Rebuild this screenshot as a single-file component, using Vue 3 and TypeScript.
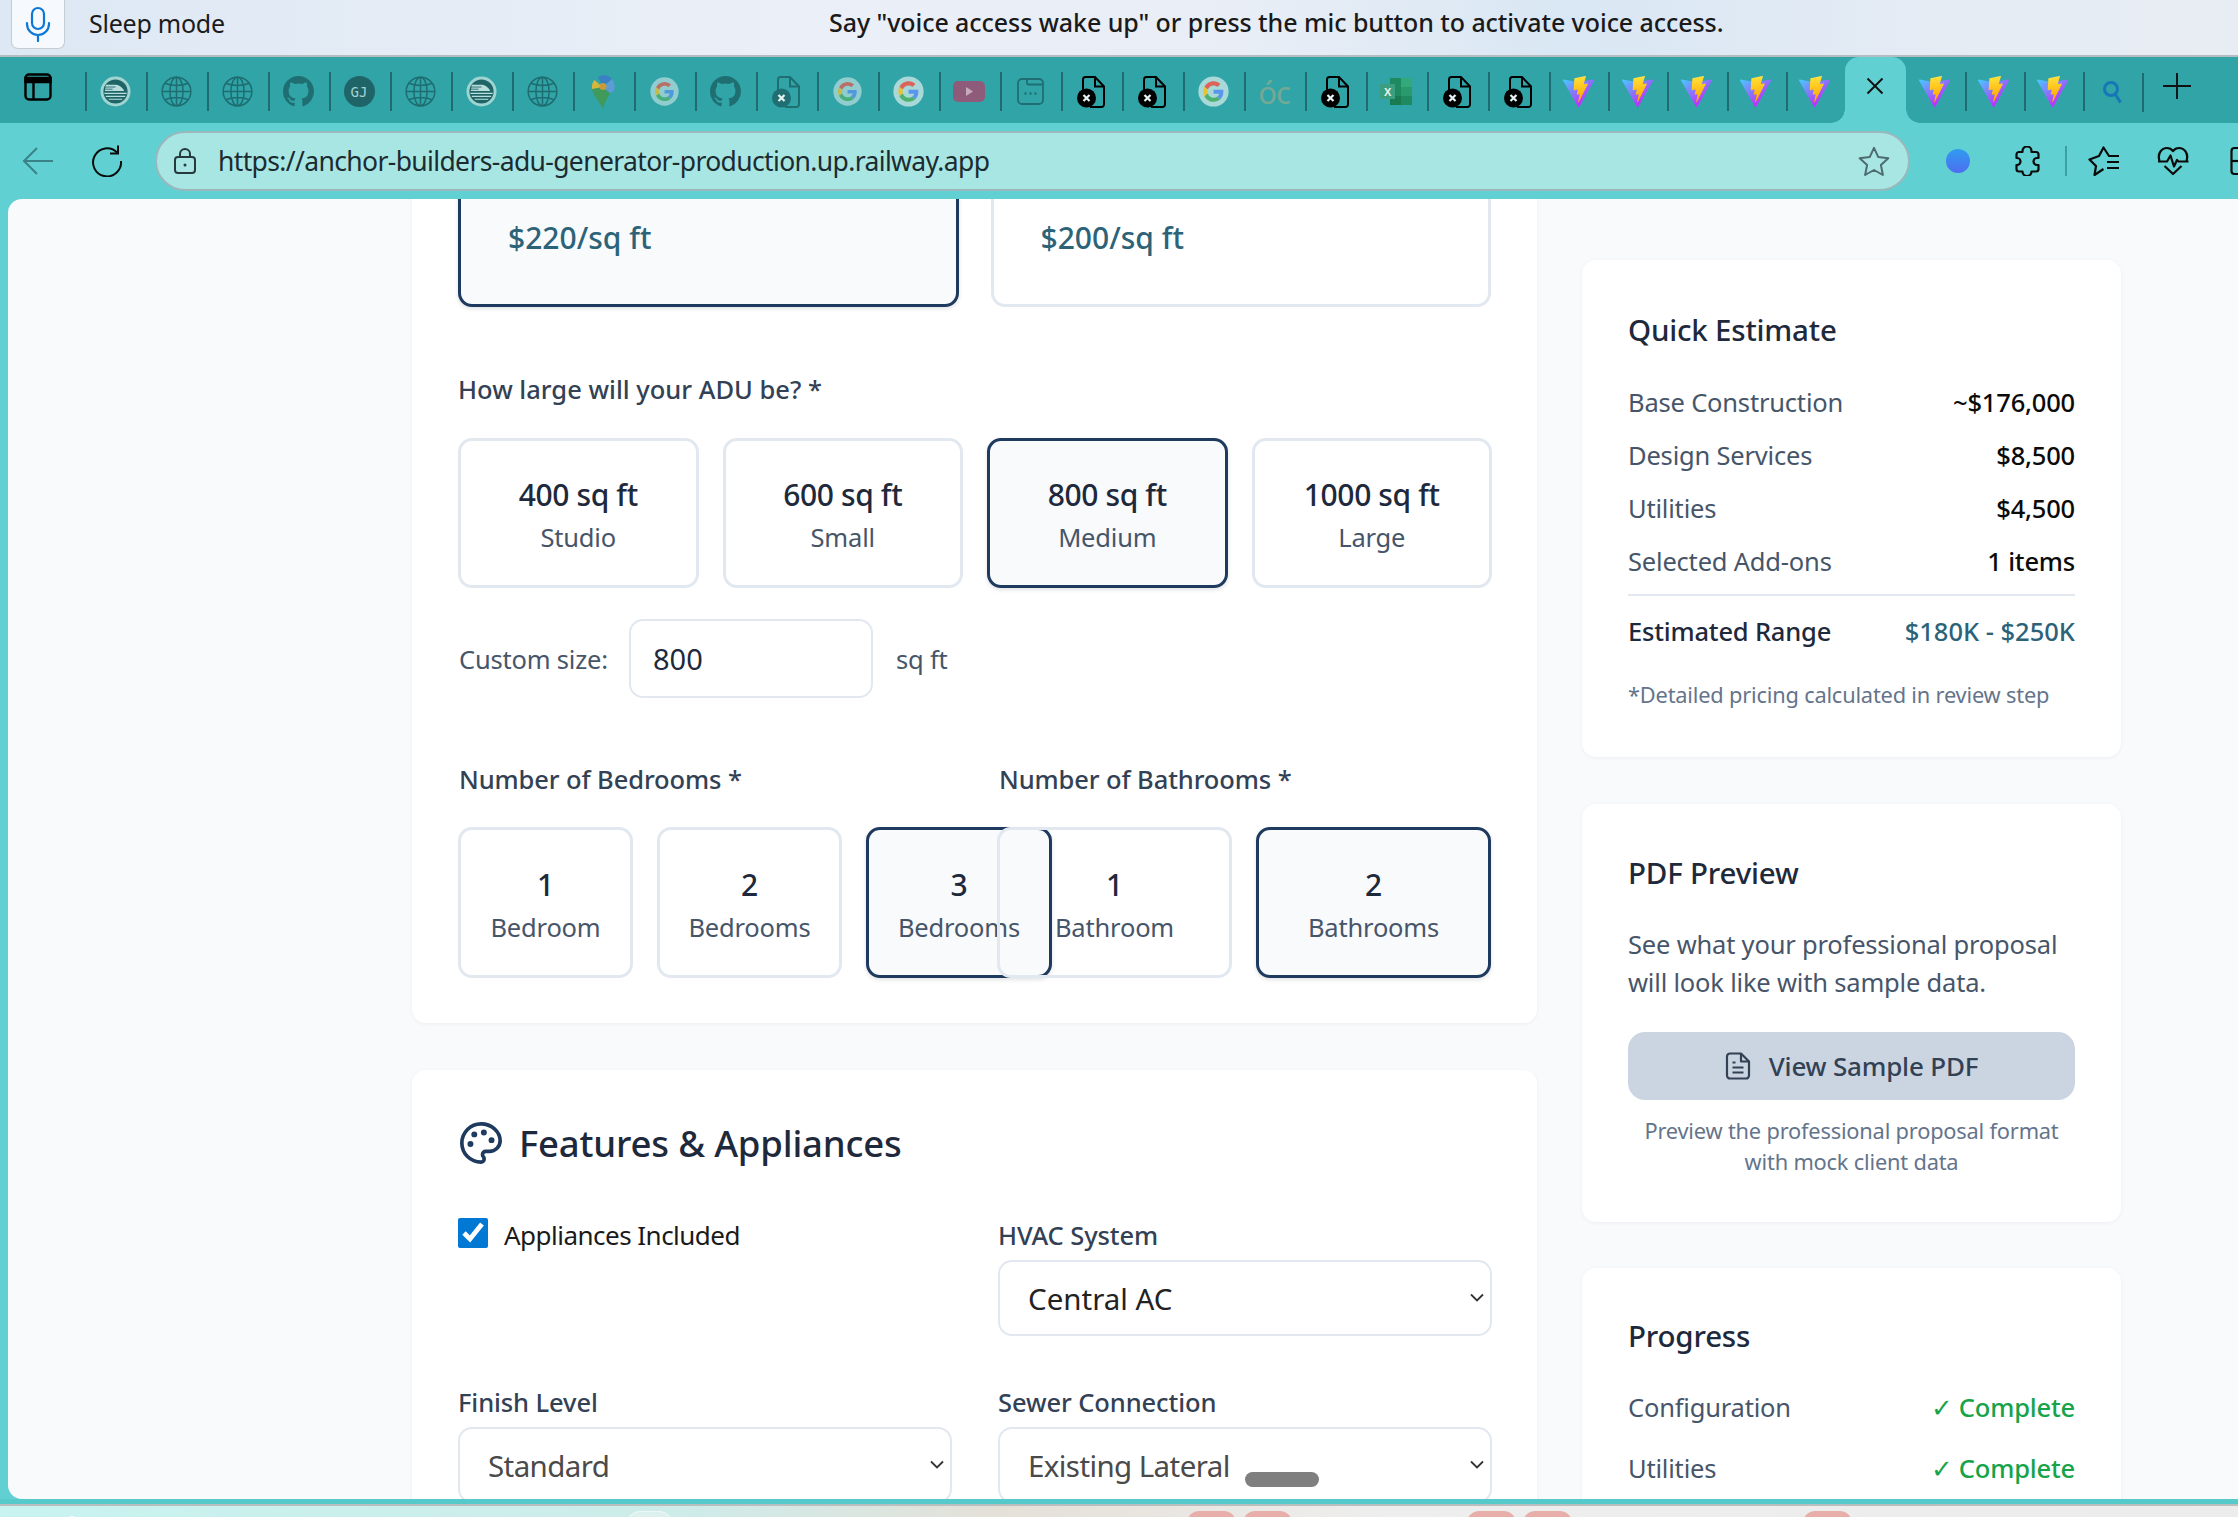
<script setup lang="ts">
const leftTabs: string[] = ['train','globe','globe','github','gj','globe','train','globe','maps','googs','github','docf','googs','goog','yt','win','doc','doc','goog','oc','doc','xl','doc','doc']
const sizes = [
  { a: '400 sq ft', b: 'Studio', on: false },
  { a: '600 sq ft', b: 'Small', on: false },
  { a: '800 sq ft', b: 'Medium', on: true },
  { a: '1000 sq ft', b: 'Large', on: false },
]
const beds = [
  { a: '1', b: 'Bedroom', on: false },
  { a: '2', b: 'Bedrooms', on: false },
  { a: '3', b: 'Bedrooms', on: true },
]
const baths = [
  { a: '1', b: 'Bathroom', on: false },
  { a: '2', b: 'Bathrooms', on: true },
]
const estimate = [
  ['Base Construction', '~$176,000'],
  ['Design Services', '$8,500'],
  ['Utilities', '$4,500'],
  ['Selected Add-ons', '1 items'],
]
</script>

<template>
  <div class="screen">
    <svg class="defs" width="0" height="0">
      <defs>
        <linearGradient id="va" x1="6" y1="33" x2="235" y2="344" gradientUnits="userSpaceOnUse"><stop offset="0" stop-color="#41D1FF"/><stop offset="1" stop-color="#BD34FE"/></linearGradient>
        <linearGradient id="vb" x1="194" y1="8" x2="236" y2="292" gradientUnits="userSpaceOnUse"><stop offset="0" stop-color="#FFEA83"/><stop offset=".08" stop-color="#FFDD35"/><stop offset="1" stop-color="#FFA800"/></linearGradient>
        <symbol id="i-vite" viewBox="0 0 410 404">
          <path fill="url(#va)" d="M399.641 59.525L215.643 388.545c-3.799 6.793-13.559 6.833-17.415.073L10.582 59.556C6.38 52.19 12.68 43.266 21.028 44.76l184.195 32.923c1.175.21 2.378.208 3.553-.006l180.343-32.87c8.32-1.517 14.649 7.337 10.522 14.718z"/>
          <path fill="url(#vb)" d="M292.965 1.574L156.801 28.255a5 5 0 00-4.03 4.611l-8.376 141.464c-.197 3.332 2.863 5.918 6.115 5.168l37.91-8.749c3.547-.818 6.752 2.306 6.023 5.873l-11.263 55.153c-.758 3.712 2.727 6.886 6.352 5.785l23.415-7.114c3.63-1.102 7.118 2.081 6.35 5.796l-17.899 86.633c-1.12 5.419 6.088 8.374 9.094 3.728l2.008-3.103 110.954-221.428c1.858-3.707-1.346-7.935-5.418-7.15l-39.022 7.532c-3.667.707-6.787-2.708-5.752-6.296l25.469-88.291c1.036-3.594-2.095-7.012-5.766-6.293z"/>
        </symbol>
        <symbol id="i-globe" viewBox="0 0 32 32">
          <g fill="none" stroke="#1e6d70" stroke-width="1.500"><circle cx="16" cy="16" r="14.800"/><ellipse cx="16" cy="16" rx="6.800" ry="14.800"/><path d="M16 1.200v29.600M4 7.500c7 3 17 3 24 0M4 24.500c7-3 17-3 24 0M1.200 16h29.600"/></g>
        </symbol>
        <symbol id="i-train" viewBox="0 0 32 32">
          <circle cx="16" cy="16" r="14" fill="#1f6467" stroke="#a0d4d1" stroke-width="3"/>
          <path d="M6 9h9c4 0 8 2 10 6.500H5z" fill="#b8dedc"/>
          <path d="M5 11.400h11M5 13.600h8" stroke="#1f6467" stroke-width=".9"/>
          <path d="M4.500 18h23M6 21h20M9 24h14" stroke="#b8dedc" stroke-width="1.200"/>
        </symbol>
        <symbol id="i-github" viewBox="0 0 16 16">
          <path fill="#1f6f72" d="M8 0C3.58 0 0 3.58 0 8c0 3.54 2.29 6.53 5.47 7.59.4.07.55-.17.55-.38 0-.19-.01-.82-.01-1.49-2.01.37-2.53-.49-2.69-.94-.09-.23-.48-.94-.82-1.13-.28-.15-.68-.52-.01-.53.63-.01 1.08.58 1.23.82.72 1.21 1.87.87 2.33.66.07-.52.28-.87.51-1.07-1.78-.2-3.64-.89-3.64-3.95 0-.87.31-1.59.82-2.15-.08-.2-.36-1.02.08-2.12 0 0 .67-.21 2.2.82.64-.18 1.32-.27 2-.27.68 0 1.36.09 2 .27 1.53-1.04 2.2-.82 2.2-.82.44 1.1.16 1.92.08 2.12.51.56.82 1.27.82 2.15 0 3.07-1.87 3.75-3.65 3.95.29.25.54.73.54 1.48 0 1.07-.01 1.93-.01 2.2 0 .21.15.46.55.38A8.013 8.013 0 0016 8c0-4.42-3.58-8-8-8z"/>
        </symbol>
        <symbol id="i-goog" viewBox="0 0 32 32">
          <circle cx="16" cy="16" r="15.600" fill="#a9d8d8"/>
          <g transform="translate(5.500 5.500) scale(.44)" opacity=".78">
            <path fill="#EA4335" d="M24 9.500c3.540 0 6.710 1.220 9.210 3.600l6.850-6.850C35.900 2.380 30.470 0 24 0 14.620 0 6.510 5.380 2.560 13.220l7.980 6.190C12.430 13.720 17.740 9.500 24 9.500z"/>
            <path fill="#4285F4" d="M46.980 24.550c0-1.570-.15-3.090-.38-4.550H24v9.020h12.940c-.58 2.960-2.260 5.480-4.780 7.180l7.730 6c4.510-4.180 7.090-10.360 7.090-17.650z"/>
            <path fill="#FBBC05" d="M10.530 28.590c-.48-1.450-.76-2.990-.76-4.590s.27-3.140.76-4.590l-7.980-6.190C.92 16.460 0 20.120 0 24c0 3.880.92 7.540 2.560 10.780l7.970-6.190z"/>
            <path fill="#34A853" d="M24 48c6.480 0 11.930-2.130 15.890-5.810l-7.730-6c-2.150 1.450-4.920 2.300-8.160 2.300-6.260 0-11.570-4.220-13.470-9.910l-7.980 6.190C6.510 42.620 14.620 48 24 48z"/>
          </g>
        </symbol>
        <symbol id="i-doc" viewBox="0 0 28 32">
          <path fill="none" stroke="currentColor" stroke-width="2" d="M6 14V3.500A2.500 2.500 0 0 1 8.500 1H18l9 9.500V28.500A2.500 2.500 0 0 1 24.500 31H13"/>
          <path fill="none" stroke="currentColor" stroke-width="2" d="M18 1v9.500h9"/>
          <circle cx="9.500" cy="22" r="9.500" fill="currentColor"/>
          <path d="M6.500 19l6 6M12.500 19l-6 6" stroke="#e8f4f4" stroke-width="2.200"/>
        </symbol>
        <symbol id="i-maps" viewBox="0 0 24 34">
          <path fill="#3f9a5c" d="M12 34C9 27 2 21 1 14l10-2 8 6c-2 5-6 10-7 16z"/>
          <path fill="#d4b73c" d="M1 14C.6 10 1.500 7 3.500 5l8 7z"/>
          <path fill="#3b7fc4" d="M7 2c5-3 11-2 14 2l-9 8z"/>
          <path fill="#5c9bd4" d="M21 4c2.500 3 3.500 8 2 12l-4 2-7-6z"/>
          <circle cx="12" cy="11.500" r="3.500" fill="#c79a3a"/>
        </symbol>
      </defs>
    </svg>

    <header class="voice">
      <div class="mic">
        <svg width="26" height="36" viewBox="0 0 26 36" fill="none" stroke="#0a78d6" stroke-width="2.200" stroke-linecap="round"><rect x="7" y="2" width="12" height="21" rx="6"/><path d="M2 17v1a11 11 0 0 0 22 0v-1M13 29v6"/></svg>
      </div>
      <span class="sleep">Sleep mode</span>
      <span class="say">Say "voice access wake up" or press the mic button to activate voice access.</span>
    </header>

    <nav class="tabs">
      <div class="panel-btn">
        <svg width="28" height="28" viewBox="0 0 28 28" fill="none" stroke="#000" stroke-width="2.400"><rect x="1.500" y="1.500" width="25" height="25" rx="3.500"/><path d="M1.500 5h25v4h-25z" fill="#000"/><path d="M9.500 9v17"/></svg>
      </div>
      <div v-for="(t, i) in leftTabs" :key="i" class="tab">
        <svg v-if="t === 'globe'" class="ic30"><use href="#i-globe"/></svg>
        <svg v-else-if="t === 'train'" class="ic30"><use href="#i-train"/></svg>
        <svg v-else-if="t === 'github'" class="ic30"><use href="#i-github"/></svg>
        <span v-else-if="t === 'gj'" class="gj">GJ</span>
        <svg v-else-if="t === 'maps'" class="maps"><use href="#i-maps"/></svg>
        <svg v-else-if="t === 'goog'" class="ic30"><use href="#i-goog"/></svg>
        <svg v-else-if="t === 'googs'" class="googs"><use href="#i-goog"/></svg>
        <svg v-else-if="t === 'docf'" class="doc docf"><use href="#i-doc"/></svg>
        <svg v-else-if="t === 'doc'" class="doc"><use href="#i-doc"/></svg>
        <svg v-else-if="t === 'yt'" width="32" height="21" viewBox="0 0 32 21"><rect width="32" height="21" rx="5" fill="#8f5b7b"/><path d="M13 6l7 4.500-7 4.500z" fill="#c7a9bc"/></svg>
        <svg v-else-if="t === 'win'" width="27" height="27" viewBox="0 0 27 27" fill="none" stroke="#1f6f72" stroke-width="1.800"><rect x="1" y="1" width="25" height="25" rx="4"/><path d="M10 1v4a1.500 1.500 0 0 0 1.500 1.500H26"/><path d="M7.500 15.500h2M12.500 15.500h2M17.500 15.500h2" stroke-width="2.600"/></svg>
        <span v-else-if="t === 'oc'" class="oc">óc</span>
        <svg v-else-if="t === 'xl'" width="32" height="27" viewBox="0 0 32 27"><rect x="10" y="0" width="22" height="27" fill="#1f8a60"/><rect x="21" y="0" width="11" height="9" fill="#33a87a"/><rect x="21" y="9" width="11" height="9" fill="#2a9a6d"/><rect x="10" y="18" width="11" height="9" fill="#197a52"/><rect x="0" y="6" width="15" height="15" fill="#3b9e7f"/><text x="7.500" y="17.500" text-anchor="middle" font-size="11" font-weight="700" fill="#e8f5ef" font-family="Liberation Sans">X</text></svg>
      </div>
      <div v-for="n in 5" :key="'v' + n" class="tab vt"><svg class="vite"><use href="#i-vite"/></svg></div>
      <div class="active-tab">
        <svg width="18" height="18" viewBox="0 0 18 18" stroke="#111" stroke-width="1.900"><path d="M1.500 1.500l15 15M16.500 1.500l-15 15"/></svg>
      </div>
      <div v-for="n in 3" :key="'w' + n" class="tab after" :class="{ nosep: n === 1 }"><svg class="vite"><use href="#i-vite"/></svg></div>
      <div class="tab after"><svg width="20" height="24" viewBox="0 0 20 24" fill="none" stroke="#1776b8" stroke-width="3"><circle cx="9" cy="9" r="6.500"/><path d="M13.500 14.500l5 8"/></svg></div>
      <div class="plus">
        <svg width="28" height="26" viewBox="0 0 28 26" stroke="#111" stroke-width="1.900"><path d="M14 0v26M0 13h28"/></svg>
      </div>
    </nav>

    <div class="toolbar">
      <svg class="back" width="32" height="30" viewBox="0 0 32 30" fill="none" stroke="#3a8286" stroke-width="2"><path d="M31 15H2M15 2L2 15l13 13"/></svg>
      <svg class="reload" width="32" height="32" viewBox="0 0 32 32" fill="none" stroke="#0b0b0b" stroke-width="2"><path d="M26 7.500A14 14 0 1 0 30 16"/><path d="M19 8.500h8v-8"/></svg>
      <div class="addr">
        <svg width="24" height="26" viewBox="0 0 24 26" fill="none" stroke="#27393d" stroke-width="2"><rect x="2" y="9" width="20" height="16" rx="3"/><path d="M7 9V6a5 5 0 0 1 10 0v3"/><circle cx="12" cy="17" r="1.500" fill="#27393d" stroke="none"/></svg>
        <span class="url">https://anchor-builders-adu-generator-production.up.railway.app</span>
        <svg class="star" width="32" height="30" viewBox="0 0 32 30" fill="none" stroke="#4e6b70" stroke-width="2" stroke-linejoin="round"><path d="M16 1.800l4.300 9.300 10 1.100-7.400 6.800 2 10-8.900-5-8.900 5 2-10-7.400-6.800 10-1.100z"/></svg>
      </div>
      <span class="blob"></span>
      <svg class="ext" width="28" height="30" viewBox="0 0 28 30" fill="none" stroke="#0b0b0b" stroke-width="2.200" stroke-linejoin="round"><path d="M9.500 6V5a4.500 4.500 0 0 1 9 0v1H23a2.500 2.500 0 0 1 2.500 2.500V12H24a3.500 3.500 0 0 0 0 7h1.500v4a2.500 2.500 0 0 1-2.500 2.500h-4.500a4.500 4.500 0 0 1-9 0H6A2.500 2.500 0 0 1 3.500 23v-4H4a3.500 3.500 0 0 0 0-7h-.500V8.500A2.500 2.500 0 0 1 6 6z"/></svg>
      <span class="tb-sep"></span>
      <svg class="fav" width="32" height="30" viewBox="0 0 32 30" fill="none" stroke="#0b0b0b" stroke-width="2.200" stroke-linejoin="round"><path d="M31 10H21L15.500 1.500 11 10 1.500 13.500 8 20l-1.500 9 9-6"/><path d="M19 16h12M19 22h12"/></svg>
      <svg class="pulse" width="32" height="30" viewBox="0 0 32 30" fill="none" stroke="#0b0b0b" stroke-width="2.200" stroke-linejoin="round"><path d="M2.500 15C0 7 5 2 10 2c2.500 0 4.500 1 6 3 1.500-2 3.500-3 6-3 5 0 10 5 7.500 13"/><path d="M1 15.500h9l3.500-6 3.500 11 3-6.500 1.500 1.500h10"/><path d="M7.500 20l8.500 8 8.500-8"/></svg>
      <svg class="split" width="24" height="30" viewBox="0 0 24 30" fill="none" stroke="#0b0b0b" stroke-width="2.200"><rect x="1.500" y="2" width="30" height="26" rx="3"/><path d="M1.500 15h30"/></svg>
    </div>

    <div class="viewport">
      <div class="layout">
        <main class="main-col">
          <section class="card first">
            <div class="price-row">
              <div class="tile price on"><span>$220/sq ft</span></div>
              <div class="tile price"><span>$200/sq ft</span></div>
            </div>
            <div class="label how">How large will your ADU be? *</div>
            <div class="size-row">
              <div v-for="s in sizes" :key="s.a" class="tile" :class="{ on: s.on }">
                <div class="t-a">{{ s.a }}</div>
                <div class="t-b">{{ s.b }}</div>
              </div>
            </div>
            <div class="custom">
              <span class="c-l c-first">Custom size:</span>
              <input class="num" value="800" />
              <span class="c-l">sq ft</span>
            </div>
            <div class="rooms">
              <div>
                <div class="label">Number of Bedrooms *</div>
                <div class="bed-row">
                  <div v-for="b in beds" :key="b.a" class="tile" :class="{ on: b.on }">
                    <div class="t-a">{{ b.a }}</div>
                    <div class="t-b">{{ b.b }}</div>
                  </div>
                </div>
              </div>
              <div>
                <div class="label">Number of Bathrooms *</div>
                <div class="bath-row">
                  <div v-for="b in baths" :key="b.a" class="tile clear" :class="{ on: b.on }">
                    <div class="t-a">{{ b.a }}</div>
                    <div class="t-b">{{ b.b }}</div>
                  </div>
                </div>
              </div>
            </div>
          </section>

          <section class="card second">
            <h2 class="sec-title">
              <svg width="46" height="46" viewBox="0 0 24 24" fill="none" stroke="#1e3a5f" stroke-width="1.900" stroke-linecap="round" stroke-linejoin="round"><path d="M12 2C6.500 2 2 6.500 2 12s4.500 10 10 10c.926 0 1.648-.746 1.648-1.688 0-.437-.18-.835-.437-1.125-.29-.289-.438-.652-.438-1.125a1.640 1.640 0 0 1 1.668-1.668h1.996c3.051 0 5.555-2.503 5.555-5.554C21.965 6.012 17.461 2 12 2z"/><circle cx="13.500" cy="6.500" r=".6" fill="#1e3a5f"/><circle cx="17.500" cy="10.500" r=".6" fill="#1e3a5f"/><circle cx="8.500" cy="7.500" r=".6" fill="#1e3a5f"/><circle cx="6.500" cy="12.500" r=".6" fill="#1e3a5f"/></svg>
              Features &amp; Appliances
            </h2>
            <div class="form-grid">
              <div class="check-row">
                <input type="checkbox" checked class="check" />
                <span>Appliances Included</span>
              </div>
              <div>
                <div class="label">HVAC System</div>
                <div class="sel-wrap">
                  <select class="sel dark"><option>Central AC</option></select>
                  <svg class="chev" width="14" height="10" viewBox="0 0 14 10" fill="none" stroke="#333" stroke-width="1.800"><path d="M1 1.500l6 6 6-6"/></svg>
                </div>
              </div>
              <div class="row2">
                <div class="label">Finish Level</div>
                <div class="sel-wrap">
                  <select class="sel"><option>Standard</option></select>
                  <svg class="chev" width="14" height="10" viewBox="0 0 14 10" fill="none" stroke="#333" stroke-width="1.800"><path d="M1 1.500l6 6 6-6"/></svg>
                </div>
              </div>
              <div class="row2">
                <div class="label">Sewer Connection</div>
                <div class="sel-wrap">
                  <select class="sel"><option>Existing Lateral</option></select>
                  <svg class="chev" width="14" height="10" viewBox="0 0 14 10" fill="none" stroke="#333" stroke-width="1.800"><path d="M1 1.500l6 6 6-6"/></svg>
                </div>
              </div>
            </div>
          </section>
        </main>

        <aside class="side-col">
          <section class="scard sc-est">
            <h3 class="s-title">Quick Estimate</h3>
            <div v-for="e in estimate" :key="e[0]" class="s-row">
              <span class="k">{{ e[0] }}</span><span class="v">{{ e[1] }}</span>
            </div>
            <div class="s-div"></div>
            <div class="s-row total"><span>Estimated Range</span><span class="rng">$180K - $250K</span></div>
            <p class="note">*Detailed pricing calculated in review step</p>
          </section>
          <section class="scard sc-pdf">
            <h3 class="s-title">PDF Preview</h3>
            <p class="para">See what your professional proposal will look like with sample data.</p>
            <div class="pdf-btn">
              <svg width="26" height="28" viewBox="0 0 26 28" fill="none" stroke="#334155" stroke-width="2.200" stroke-linejoin="round"><path d="M16 1.500H5A3 3 0 0 0 2 4.500v19a3 3 0 0 0 3 3h16a3 3 0 0 0 3-3V9.500z"/><path d="M16 1.500v8h8M7.500 10.500h3M7.500 15.500h11M7.500 20.500h11"/></svg>
              <span>View Sample PDF</span>
            </div>
            <p class="cap">Preview the professional proposal format with mock client data</p>
          </section>
          <section class="scard">
            <h3 class="s-title">Progress</h3>
            <div class="p-row"><span class="k">Configuration</span><span class="ok">✓ Complete</span></div>
            <div class="p-row"><span class="k">Utilities</span><span class="ok">✓ Complete</span></div>
          </section>
        </aside>
      </div>
      <span class="pill"></span>
    </div>

    <div class="edge"></div>
    <footer class="taskbar">
      <span class="bump b-small"></span>
      <span class="bump b-white"></span>
      <span class="bump b-pink p1"></span>
      <span class="bump b-pink p2"></span>
      <span class="bump b-pink p3"></span>
      <span class="bump b-pink p4"></span>
      <span class="bump b-pink p5"></span>
    </footer>
  </div>
</template>

<style>
html, body { margin: 0; background: #60d0d2; }
</style>

<style scoped>
.screen { width: 2238px; height: 1517px; overflow: hidden; display: flex; flex-direction: column; font-family: "Noto Sans", "Open Sans", sans-serif; background: #60d0d2; letter-spacing: -0.012em; }
.defs { position: absolute; }

.voice { height: 57px; flex: none; display: flex; align-items: flex-start; background: linear-gradient(90deg, #dde8f4 0%, #ebeff7 35%, #e9eef6 55%, #d9e7f4 70%, #e6ecf4 88%, #e8edf3 100%); position: relative; box-sizing: border-box; border-bottom: 2px solid #b5bcbf; }
.mic { width: 54px; height: 49px; margin-left: 11px; background: #f6f9fd; border: 1px solid #c6ccd3; border-top: 0; border-radius: 0 0 7px 7px; display: flex; align-items: center; justify-content: center; box-sizing: border-box; }
.sleep { margin-left: 24px; margin-top: 6px; font-size: 25px; color: #1b1b1b; letter-spacing: -0.01em; }
.say { position: absolute; left: 829px; top: 5px; font-size: 25px; font-weight: 500; color: #1a1a1a; white-space: nowrap; letter-spacing: -0.0025em; }

.tabs { height: 66px; flex: none; background: #31a4a8; display: flex; align-items: flex-start; }
.panel-btn { width: 85px; height: 66px; display: flex; align-items: center; justify-content: center; padding-right: 9px; padding-bottom: 6px; box-sizing: border-box; flex: none; }
.tab { width: 61px; height: 39px; margin-top: 15px; padding-right: 3px; flex: none; display: flex; align-items: center; justify-content: center; border-left: 2px solid #1f6b70; box-sizing: border-box; }
.tab.vt { width: 59.200px; }
.tab.after { width: 59px; }
.tab.nosep { border-left-color: transparent; }
.ic30 { width: 31px; height: 31px; }
.googs { width: 29px; height: 29px; opacity: .8; }
.gj { width: 31px; height: 31px; border-radius: 50%; background: #1f6467; color: #a6d2d2; font: 400 14px "DejaVu Sans Mono", monospace; display: flex; align-items: center; justify-content: center; letter-spacing: 0; }
.maps { width: 24px; height: 34px; }
.doc { width: 28px; height: 32px; color: #000; }
.docf { color: #1f6f72; }
.oc { font: 400 31px "Noto Sans", sans-serif; color: #74a996; letter-spacing: -1px; line-height: 36px; }
.vite { width: 33px; height: 32px; }
.active-tab { width: 61px; height: 66px; background: #60d0d2; border-radius: 14px 14px 0 0; display: flex; align-items: center; justify-content: center; flex: none; padding-bottom: 9px; box-sizing: border-box; position: relative; }
.active-tab::before, .active-tab::after { content: ""; position: absolute; bottom: 0; width: 14px; height: 14px; }
.active-tab::before { right: 100%; background: radial-gradient(circle at 0 0, #31a4a8 13.500px, #60d0d2 14px); }
.active-tab::after { left: 100%; background: radial-gradient(circle at 100% 0, #31a4a8 13.500px, #60d0d2 14px); }
.plus { height: 39px; margin-top: 16px; width: 60px; border-left: 2px solid #1f6b70; display: flex; align-items: flex-start; padding-left: 19px; box-sizing: border-box; flex: none; }

.toolbar { height: 76px; flex: none; background: #60d0d2; display: flex; align-items: center; position: relative; }
.back { margin-left: 22px; flex: none; }
.reload { margin-left: 37px; flex: none; }
.addr { margin-left: 32px; width: 1755px; height: 60px; flex: none; background: #a8e6e4; border: 2px solid #9ab8bc; border-radius: 30px; box-sizing: border-box; display: flex; align-items: center; padding: 0 18px 0 16px; }
.url { margin-left: 21px; font-size: 26.500px; letter-spacing: -0.024em; color: #1c2b30; flex: 1; white-space: nowrap; }
.star { flex: none; }
.blob { width: 24px; height: 24px; border-radius: 50%; margin-left: 36px; flex: none; background: linear-gradient(180deg, #2f9cf0, #4e6ef0); }
.ext { margin-left: 43px; flex: none; }
.tb-sep { width: 2px; height: 30px; background: #3f9ea2; margin-left: 24px; flex: none; }
.fav { margin-left: 21px; flex: none; }
.pulse { margin-left: 37px; flex: none; }
.split { margin-left: 41px; flex: none; }

.viewport { height: 1300px; flex: none; margin-left: 8px; background: #f8fafc; border-radius: 14px 0 0 14px; overflow: hidden; position: relative; }
.layout { display: grid; grid-template-columns: 1125px 539px; column-gap: 45px; padding-left: 404px; }
.main-col { margin-top: -88px; }
.card { background: #fff; border-radius: 14px; box-shadow: 0 1px 4px rgba(15, 23, 42, .05); padding: 46px 45px 45px 46px; box-sizing: border-box; }
.second { margin-top: 47px; }
.tile { border: 3px solid #e2e8f0; border-radius: 14px; background: #fff; box-sizing: border-box; display: flex; flex-direction: column; align-items: center; justify-content: center; padding-top: 5px; }
.tile.on { border-color: #1e3a5f; background: #f8fafc; box-shadow: 0 2px 4px rgba(15, 23, 42, .12); }
.tile.clear { background: transparent; box-shadow: none; }
.tile.clear.on { background: #f8fafc; box-shadow: 0 2px 4px rgba(15, 23, 42, .12); }
.price-row { display: grid; grid-template-columns: 500.500px 500.500px; column-gap: 32px; }
.price { height: 150px; align-items: flex-start; justify-content: flex-end; padding: 0 0 46px 47px; font-size: 30px; font-weight: 500; letter-spacing: 0; color: #2c6378; }
.label { font-size: 25.500px; font-weight: 500; color: #334155; line-height: 34px; height: 34px; white-space: nowrap; letter-spacing: -0.004em; }
.how { margin-top: 65px; letter-spacing: 0; }
.size-row { margin-top: 32px; display: grid; grid-template-columns: repeat(4, 240.500px); column-gap: 24px; }
.size-row .tile { height: 150px; }
.t-a { font-size: 30px; font-weight: 500; color: #1e293b; line-height: 40px; letter-spacing: -0.012em; }
.t-b { font-size: 25.500px; color: #475569; line-height: 40px; margin-top: 2px; }
.custom { margin-top: 31px; display: flex; align-items: center; height: 79px; }
.c-l { font-size: 25.500px; color: #475569; white-space: nowrap; }
.c-first { width: 148px; flex: none; margin-left: 1px; }
.num { width: 244px; height: 79px; margin: 0 23px 0 22px; box-sizing: border-box; border: 2px solid #e2e8f0; border-radius: 14px; padding: 0 22px; font: 400 29px "Noto Sans", sans-serif; color: #1e293b; background: #fff; outline: none; }
.rooms { margin-top: 64px; display: grid; grid-template-columns: 494px 494px; column-gap: 46px; }
.rooms .label { margin-left: 1px; }
.bed-row { margin-top: 31px; display: grid; grid-template-columns: 175px 185px 186px; column-gap: 24px; }
.bath-row { margin-top: 31px; display: grid; grid-template-columns: 235px 235px; column-gap: 24px; margin-left: -1px; position: relative; }
.bed-row .tile, .bath-row .tile { height: 151px; padding-top: 7px; }

.sec-title { margin: 0; height: 54px; display: flex; align-items: center; gap: 15px; font-size: 36.500px; font-weight: 500; color: #1e293b; }
.form-grid { margin-top: 48px; display: grid; grid-template-columns: 494px 494px; column-gap: 46px; }
.check-row { display: flex; align-items: flex-start; gap: 16px; font-size: 26px; color: #1a1a1a; line-height: 34px; letter-spacing: -0.02em; }
.check { width: 30px; height: 30px; margin: 0; accent-color: #0078d4; flex: none; }
.sel-wrap { margin-top: 8px; position: relative; height: 76px; }
.sel { width: 100%; height: 100%; appearance: none; border: 2px solid #e2e8f0; border-radius: 14px; background: #fff; padding: 0 28px; font: 400 29.500px "Noto Sans", sans-serif; color: #4a4a4a; outline: none; box-sizing: border-box; letter-spacing: -0.02em; }
.sel.dark { color: #222; letter-spacing: 0; }
.chev { position: absolute; right: 8px; top: 33px; }
.row2 { margin-top: 49px; }

.side-col { padding-top: 61px; }
.scard { background: #fff; border-radius: 14px; box-shadow: 0 1px 4px rgba(15, 23, 42, .05); padding: 48px 46px 45px; margin-bottom: 47px; box-sizing: border-box; }
.sc-est { padding-top: 50px; padding-bottom: 46.500px; }
.sc-pdf { padding-top: 49px; margin-bottom: 46px; }
.s-title { margin: 0; font-size: 29.500px; font-weight: 500; line-height: 40px; color: #1e293b; }
.s-row { display: flex; justify-content: space-between; font-size: 25.500px; line-height: 34px; margin-top: 19px; }
.s-title + .s-row { margin-top: 35px; }
.k { color: #475569; }
.v { color: #0b0b0b; font-weight: 500; }
.s-div { height: 2px; background: #e2e8f0; margin-top: 16px; }
.s-row.total { margin-top: 18px; font-weight: 500; color: #1e293b; }
.rng { color: #2c6378; font-weight: 500; letter-spacing: 0; }
.note { margin: 32px 0 0; font-size: 21.800px; line-height: 30px; color: #64748b; }
.para { margin: 32px 0 0; font-size: 25.500px; line-height: 38px; color: #475569; }
.pdf-btn { margin-top: 31px; height: 68px; border-radius: 17px; background: #cbd5e1; color: #334155; display: flex; align-items: center; justify-content: center; gap: 18px; font-size: 26px; font-weight: 500; }
.cap { margin: 15px 0 0; font-size: 21.800px; line-height: 31px; color: #64748b; text-align: center; }
.p-row { display: flex; justify-content: space-between; font-size: 25.500px; line-height: 34px; margin-top: 27px; }
.s-title + .p-row { margin-top: 34px; }
.ok { color: #16a34a; font-weight: 500; }
.pill { position: absolute; left: 1237px; top: 1273px; width: 74px; height: 15px; border-radius: 8px; background: #7f7f7f; }

.edge { height: 5px; flex: none; background: #56c9cb; }
.taskbar { height: 13px; flex: none; border-top: 2px solid #b9bebe; box-sizing: border-box; background: linear-gradient(90deg, #c8f3f0 0%, #cdecea 30%, #e5e0d8 45%, #eeeeee 62%, #ececec 100%); position: relative; overflow: hidden; }
.bump { position: absolute; top: 5px; height: 12px; border-radius: 14px 14px 0 0; }
.b-small { left: 64px; top: 10px; width: 16px; background: #eef9f8; }
.b-white { left: 628px; top: 6px; width: 43px; background: #dcf0ee; box-shadow: 0 0 0 1px #eef7f6; }
.b-pink { background: #e8aeaa; width: 49px; }
.p1 { left: 1187px; } .p2 { left: 1243px; } .p3 { left: 1467px; } .p4 { left: 1523px; } .p5 { left: 1803px; }
</style>
